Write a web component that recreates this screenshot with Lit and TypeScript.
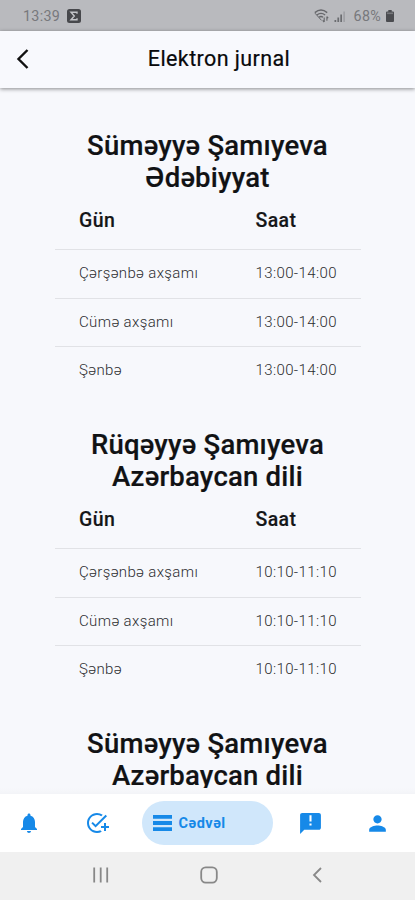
import { LitElement, html, css } from "lit";
import { customElement, property } from "lit/decorators.js";

interface Lesson { day: string; time: string; }
interface Course { student: string; subject: string; lessons: Lesson[]; }

const week = (time: string): Lesson[] =>
  ["Çərşənbə axşamı", "Cümə axşamı", "Şənbə"].map((day) => ({ day, time }));

const courses: Course[] = [
  { student: "Süməyyə Şamıyeva", subject: "Ədəbiyyat", lessons: week("13:00-14:00") },
  { student: "Rüqəyyə Şamıyeva", subject: "Azərbaycan dili", lessons: week("10:10-11:10") },
  { student: "Süməyyə Şamıyeva", subject: "Azərbaycan dili", lessons: [] },
];

@customElement("status-bar")
export class StatusBar extends LitElement {
  static styles = css`
    :host { display: flex; align-items: center; height: 31px; box-sizing: border-box; flex: none;
      padding: 1px 21px 0 23px; background: #b9babe; color: #77787c; font-size: 14.3px; }
    .time { letter-spacing: 0.3px; }
    .sigma { margin-left: 7px; }
    .wifi { margin-left: auto; }
    .signal { margin-left: 5px; }
    .charge { margin-left: 8px; letter-spacing: 0.3px; }
    .battery { margin-left: 5px; }
    svg { display: block; }
  `;
  render() {
    return html`
      <span class="time">13:39</span>
      <svg class="sigma" width="14" height="14" viewBox="0 0 14 14">
        <rect width="14" height="14" rx="2.5" fill="#47484c" />
        <path d="M10 4.7V3.3H4L7.3 7 4 10.7h6V9.3" fill="none" stroke="#c4c5c9" stroke-width="1.4" />
      </svg>
      <svg class="wifi" width="15" height="14" viewBox="0 0 15 14" fill="none" stroke="#66676b">
        <path d="M.8 3.6C4.6.4 9.4.4 13.2 3.6M2.9 6c2.5-2 5.7-2 8.2 0M5 8.3c1.3-1 2.7-1 4 0" stroke-width="1.4" />
        <path d="M1 4.2 7.5 11.4" stroke-width="1" />
        <path d="M10.2 13V8.6M8.7 11.4l1.5 1.6M12.9 7.6v4.2M14.2 9.2l-1.3-1.6" stroke-width="1.1" />
      </svg>
      <svg class="signal" width="12" height="12" viewBox="0 0 12 12">
        <path d="M.5 10h1.7v2H.5zM3.4 7.5h1.7V12H3.4zM6.3 4.5H8V12H6.3z" fill="#6b6c70" />
        <path d="M9.3 1.5H11V12H9.3z" fill="#a0a1a5" />
      </svg>
      <span class="charge">68%</span>
      <svg class="battery" width="8" height="12" viewBox="0 0 8 12">
        <path d="M2.3 0h3.4v1.5H7A1 1 0 0 1 8 2.5V11a1 1 0 0 1-1 1H1a1 1 0 0 1-1-1V2.5a1 1 0 0 1 1-1h1.3z" fill="#4b4c50" />
        <path d="M.9 2.5h6.2v1.6H.9z" fill="#77787c" />
      </svg>
    `;
  }
}

@customElement("course-table")
export class CourseTable extends LitElement {
  @property({ attribute: false }) course!: Course;
  static styles = css`
    :host { display: block; height: 299px; flex: none; }
    .title { margin: 0; text-align: center; font-size: 27.5px; line-height: 32.4px; font-weight: 500; color: #111214;
      letter-spacing: 0.22px; -webkit-text-stroke: 0.2px #111214; }
    .table { margin: 0 54px 0 55px; }
    .row { display: grid; grid-template-columns: 176.5px 1fr; align-items: center; height: 48.5px;
      box-sizing: border-box; padding: 0 10px 1px 24px; border-top: 1px solid #e1e2e6;
      font-size: 15px; font-weight: 300; color: #2c2d30; letter-spacing: 0.38px; }
    .head { height: 54.8px; padding-bottom: 1.5px; border-top: 0; font-size: 19.5px; font-weight: 500; color: #151618;
      letter-spacing: 0.4px; -webkit-text-stroke: 0.15px #151618; }
  `;
  render() {
    const { student, subject, lessons } = this.course;
    return html`
      <h2 class="title">${student}<br />${subject}</h2>
      ${lessons.length
        ? html`<div class="table">
            <div class="row head"><span>Gün</span><span>Saat</span></div>
            ${lessons.map((l) => html`<div class="row"><span class="day">${l.day}</span><span class="hours">${l.time}</span></div>`)}
          </div>`
        : null}
    `;
  }
}

@customElement("tab-bar")
export class TabBar extends LitElement {
  static styles = css`
    :host { display: grid; grid-template-columns: 57px 79px 142px 64px 70px; justify-items: center; align-items: center;
      flex: none; height: 58px; box-sizing: border-box; background: #fff; color: #1689e8; }
    svg { display: block; fill: currentColor; }
    .pill { display: flex; align-items: center; height: 44px; width: 131px; box-sizing: border-box;
      padding-left: 11px; gap: 7px; border-radius: 22px; background: #d0e7fb; }
    .label { font-size: 14.5px; font-weight: 700; letter-spacing: 0.5px; }
  `;
  render() {
    return html`
      <svg width="24" height="24" viewBox="0 0 24 24"><path d="M12 22c1.1 0 2-.9 2-2h-4c0 1.1.89 2 2 2zm6-6v-5c0-3.07-1.64-5.64-4.5-6.32V4c0-.83-.67-1.5-1.5-1.5s-1.5.67-1.5 1.5v.68C7.63 5.36 6 7.92 6 11v5l-2 2v1h16v-1l-2-2z" /></svg>
      <svg width="24" height="24" viewBox="0 0 24 24"><path d="M22 5.18 10.59 16.6l-4.24-4.24 1.41-1.41 2.83 2.83 10-10L22 5.18zM12 20c-4.41 0-8-3.59-8-8s3.59-8 8-8c1.57 0 3.04.46 4.28 1.25l1.45-1.45A10.02 10.02 0 0 0 12 2C6.48 2 2 6.48 2 12s4.48 10 10 10c1.73 0 3.36-.44 4.78-1.22l-1.5-1.5c-1 .46-2.11.72-3.28.72zm7-5h-3v2h3v3h2v-3h3v-2h-3v-3h-2v3z" /></svg>
      <div class="pill">
        <svg width="19" height="16" viewBox="0 0 19 16"><path d="M0 0h19v3.7H0zM0 6.1h19v3.8H0zM0 12.3h19V16H0z" /></svg>
        <span class="label">Cədvəl</span>
      </div>
      <svg width="25" height="25" viewBox="0 0 24 24"><path d="M20 2H4c-1.1 0-1.99.9-1.99 2L2 22l4-4h14c1.1 0 2-.9 2-2V4c0-1.1-.9-2-2-2zm-7 12h-2v-2h2v2zm0-4h-2V4h2v6z" /></svg>
      <svg width="25" height="25" viewBox="0 0 24 24"><path d="M12 12c2.21 0 4-1.79 4-4s-1.79-4-4-4-4 1.79-4 4 1.79 4 4 4zm0 2c-2.67 0-8 1.34-8 4v2h16v-2c0-2.66-5.33-4-8-4z" /></svg>
    `;
  }
}

@customElement("app-root")
export class AppRoot extends LitElement {
  static styles = css`
    :host { display: flex; flex-direction: column; width: 415px; height: 900px; overflow: hidden;
      background: #f7f8fc; font-family: Roboto, "Noto Sans", sans-serif; }
    svg { display: block; fill: none; }
    .bar { display: grid; grid-template-columns: 40px 1fr 21px; align-items: center; flex: none; height: 57px;
      box-sizing: border-box; padding: 0 0 2px 4px; background: #f8f9fd; z-index: 1;
      box-shadow: 0 1px 4px rgba(0, 0, 0, 0.45); }
    .heading { margin: 0; text-align: center; font-size: 21.5px; line-height: 28px; font-weight: 400; color: #08090b;
      letter-spacing: 0.4px; -webkit-text-stroke: 0.2px #08090b; }
    .back { margin: 1px 0 0 12px; }
    .list { flex: none; height: 700px; box-sizing: border-box; overflow: hidden; padding-top: 41.5px; }
    .gap { flex: none; height: 6px; background: linear-gradient(#f7f8fc, #f3f4f7); }
    .system { flex: 1; display: flex; align-items: center; justify-content: space-between;
      box-sizing: border-box; padding: 0 93px 2px 92px; background: #f0f0f0; }
    .home { margin-right: 4px; }
  `;
  render() {
    return html`
      <status-bar></status-bar>
      <header class="bar">
        <svg class="back" width="14" height="20" viewBox="0 0 14 20"><path d="M11.5 1 2.5 10l9 9" stroke="#111" stroke-width="2.4" /></svg>
        <h1 class="heading">Elektron jurnal</h1>
      </header>
      <main class="list">${courses.map((c) => html`<course-table .course=${c}></course-table>`)}</main>
      <div class="gap"></div>
      <tab-bar></tab-bar>
      <footer class="system">
        <svg width="17" height="16" viewBox="0 0 17 16"><path d="M2.2.5v15M8.7.5v15M15.2.5v15" stroke="#888" stroke-width="1.8" /></svg>
        <svg class="home" width="18" height="18" viewBox="0 0 18 18"><rect x="1.2" y="1.4" width="15.6" height="15.2" rx="4.5" stroke="#888" stroke-width="1.8" /></svg>
        <svg width="10" height="16" viewBox="0 0 10 16"><path d="M9 1 2 8l7 7" stroke="#888" stroke-width="1.8" /></svg>
      </footer>
    `;
  }
}
